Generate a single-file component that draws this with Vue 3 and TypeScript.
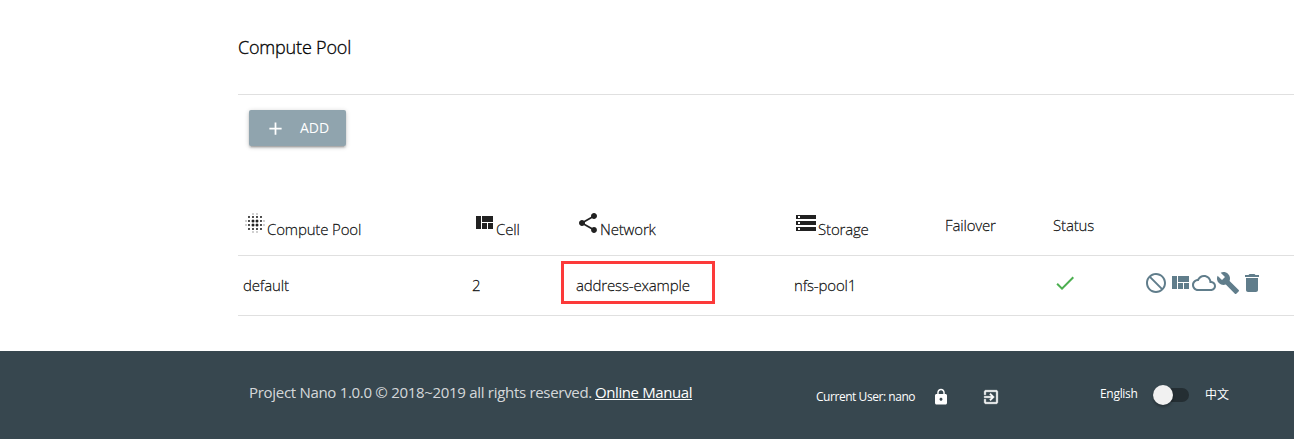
<script setup lang="ts">
import { ref } from 'vue'

interface Column {
  key: string
  label: string
  icon?: string
}

const icons: Record<string, string> = {
  add: 'M19 13h-6v6h-2v-6H5v-2h6V5h2v6h6v2z',
  quilt: 'M10 18h5v-6h-5v6zm-6 0h5V5H4v13zm12 0h5v-6h-5v6zM10 5v6h11V5H10z',
  share:
    'M18 16.08c-.76 0-1.44.3-1.96.77L8.91 12.7c.05-.23.09-.46.09-.7s-.04-.47-.09-.7l7.05-4.11c.54.5 1.25.81 2.04.81 1.66 0 3-1.34 3-3s-1.34-3-3-3-3 1.34-3 3c0 .24.04.47.09.7L8.04 9.81C7.5 9.31 6.79 9 6 9c-1.66 0-3 1.34-3 3s1.34 3 3 3c.79 0 1.5-.31 2.04-.81l7.12 4.16c-.05.21-.08.43-.08.65 0 1.61 1.31 2.92 2.92 2.92s2.92-1.31 2.92-2.92-1.31-2.92-2.92-2.92z',
  storage: 'M2 20h20v-4H2v4zm2-3h2v2H4v-2zM2 4v4h20V4H2zm4 3H4V5h2v2zm-4 7h20v-4H2v4zm2-3h2v2H4v-2z',
  check: 'M9 16.17L4.83 12l-1.42 1.41L9 19 21 7l-1.41-1.41z',
  block:
    'M12 2C17.52 2 22 6.48 22 12s-4.48 10-10 10S2 17.52 2 12 6.48 2 12 2zM20 12c0-4.42-3.58-8-8-8-1.85 0-3.55.63-4.9 1.69L18.31 16.9C19.37 15.55 20 13.85 20 12zm-8 8c1.85 0 3.55-.63 4.9-1.69L5.69 7.1C4.63 8.45 4 10.15 4 12c0 4.42 3.58 8 8 8z',
  cloud:
    'M19.35 10.04C18.67 6.59 15.64 4 12 4 9.11 4 6.6 5.64 5.35 8.04 2.34 8.36 0 10.91 0 14c0 3.31 2.69 6 6 6h13c2.76 0 5-2.24 5-5 0-2.64-2.05-4.78-4.65-4.96zM19 18H6c-2.21 0-4-1.79-4-4s1.79-4 4-4h.71C7.37 7.69 9.48 6 12 6c3.04 0 5.5 2.46 5.5 5.5v.5H19c1.66 0 3 1.34 3 3s-1.34 3-3 3z',
  build:
    'M22.7 19l-9.1-9.1c.9-2.3.4-5-1.5-6.9-2-2-5-2.4-7.4-1.3L9 6 6 9 1.6 4.7C.4 7.1.9 10.1 2.9 12.1c1.9 1.9 4.6 2.4 6.9 1.5l9.1 9.1c.4.4 1 .4 1.4 0l2.3-2.3c.5-.4.5-1.1.1-1.4z',
  trash: 'M6 19c0 1.1.9 2 2 2h8c1.1 0 2-.9 2-2V7H6v12zM19 4h-3.5l-1-1h-5l-1 1H5v2h14V4z',
  lock: 'M18 8h-1V6c0-2.76-2.24-5-5-5S7 3.24 7 6v2H6c-1.1 0-2 .9-2 2v10c0 1.1.9 2 2 2h12c1.1 0 2-.9 2-2V10c0-1.1-.9-2-2-2zm-6 9c-1.1 0-2-.9-2-2s.9-2 2-2 2 .9 2 2-.9 2-2 2zm3.1-9H8.9V6c0-1.71 1.39-3.1 3.1-3.1s3.1 1.39 3.1 3.1v2z',
  exit: 'M10.09 15.59L11.5 17l5-5-5-5-1.41 1.41L12.67 11H3v2h9.67l-2.58 2.59zM19 3H5c-1.11 0-2 .9-2 2v4h2V5h14v14H5v-4H3v4c0 1.1.89 2 2 2h14c1.1 0 2-.9 2-2V5c0-1.1-.9-2-2-2z',
}

const columns: Column[] = [
  { key: 'pool', label: 'Compute Pool', icon: 'blur' },
  { key: 'cell', label: 'Cell', icon: 'quilt' },
  { key: 'network', label: 'Network', icon: 'share' },
  { key: 'storage', label: 'Storage', icon: 'storage' },
  { key: 'failover', label: 'Failover' },
  { key: 'status', label: 'Status' },
]

// Dots of the pool icon on a 6x6 grid, fading from the centre outwards
const steps = [3, 6, 10, 14, 18, 21]
const dots = steps.flatMap((x, i) =>
  steps.map((y, j) => {
    const dx = Math.abs(i - 2.5)
    const dy = Math.abs(j - 2.5)
    const outer = Math.max(dx, dy)
    const inner = Math.min(dx, dy)
    if (outer > 2) return { x, y, r: inner < 1 ? 0.65 : 0 , o: 0.6 }
    return { x, y, r: outer < 1 ? 1.5 : 1.05, o: 1 }
  }),
)

const actions = ['block', 'quilt', 'cloud', 'build', 'trash']
const chinese = ref(false)
</script>

<template>
  <div class="page">
    <main class="content">
      <header class="heading"><span>Compute Pool</span></header>
      <div class="toolbar">
        <button class="add" type="button">
          <svg class="icon" viewBox="0 0 24 24"><path :d="icons.add" /></svg>
          <span>ADD</span>
        </button>
      </div>
      <section class="table">
        <div class="row head">
          <div v-for="c in columns" :key="c.key" class="cell">
            <svg v-if="c.icon === 'blur'" class="icon" viewBox="0 0 24 24">
              <circle v-for="(d, i) in dots" :key="i" :cx="d.x" :cy="d.y" :r="d.r" :opacity="d.o" />
            </svg>
            <svg v-else-if="c.icon" class="icon" viewBox="0 0 24 24"><path :d="icons[c.icon]" /></svg>
            <span :class="['label', { plain: !c.icon }]">{{ c.label }}</span>
          </div>
        </div>
        <div class="row body">
          <div class="cell"><span>default</span></div>
          <div class="cell"><span>2</span></div>
          <div class="cell marked"><span>address-example</span></div>
          <div class="cell"><span>nfs-pool1</span></div>
          <div class="cell"></div>
          <div class="cell ok"><svg class="icon" viewBox="0 0 24 24"><path :d="icons.check" /></svg></div>
          <div class="cell actions">
            <svg v-for="a in actions" :key="a" class="icon" viewBox="0 0 24 24"><path :d="icons[a]" /></svg>
          </div>
        </div>
      </section>
    </main>
    <footer class="footer">
      <div class="copy">
        <span>Project Nano 1.0.0 © 2018~2019 all rights reserved.</span>
        <a>Online Manual</a>
      </div>
      <div class="user">
        <span class="t-user">Current User: nano</span>
        <svg class="small lock" viewBox="0 0 24 24"><path :d="icons.lock" /></svg>
        <svg class="small exit" viewBox="0 0 24 24"><path :d="icons.exit" /></svg>
      </div>
      <div class="lang">
        <span class="t-english">English</span>
        <span :class="['switch', { on: chinese }]" @click="chinese = !chinese"><i class="knob"></i></span>
        <span class="zh">中文</span>
      </div>
    </footer>
  </div>
</template>

<style>
body {
  margin: 0;
  background: #fff;
}
</style>

<style scoped>
.page {
  width: 1294px;
  height: 439px;
  overflow: hidden;
  display: flex;
  flex-direction: column;
  font-family: 'Open Sans', 'Noto Sans', 'Noto Sans CJK SC', sans-serif;
  font-size: 15px;
  line-height: 22px;
  color: rgba(0, 0, 0, 0.87);
  white-space: nowrap;
}
.content {
  height: 351px;
  margin-left: 238px;
}
.heading {
  height: 94px;
  display: flex;
  align-items: center;
  border-bottom: 1px solid #e0e0e0;
  font-size: 18px;
  font-weight: 300;
  letter-spacing: -0.18px;
  color: #000;
}
.heading span,
.row span {
  -webkit-text-stroke: 0.3px currentColor;
}
.toolbar {
  height: 85px;
  padding: 15px 0 0 11px;
  box-sizing: content-box;
}
.add {
  display: flex;
  align-items: center;
  width: 97px;
  height: 36px;
  padding: 0 16px;
  border: 0;
  border-radius: 2px;
  background: #90a4ae;
  color: #fff;
  font: 14px 'Open Sans', sans-serif;
  box-shadow: 0 2px 2px rgba(0, 0, 0, 0.14), 0 3px 1px -2px rgba(0, 0, 0, 0.12), 0 1px 5px rgba(0, 0, 0, 0.2);
}
.add span {
  margin-top: -1px;
}
.add .icon {
  width: 21px;
  height: 21px;
  margin-right: 14px;
}
.icon {
  width: 24px;
  height: 24px;
  flex: none;
  display: block;
  fill: currentColor;
}
.row {
  display: grid;
  grid-template-columns: 229px 104px 218px 151px 108px 93px 1fr;
  height: 60px;
  border-bottom: 1px solid #e0e0e0;
  font-weight: 300;
  letter-spacing: -0.16px;
}
.body {
  height: 59px;
}
.cell {
  display: flex;
  align-items: center;
  padding-left: 5px;
}
.body .cell {
  padding-bottom: 1px;
}
.head .cell {
  align-items: flex-start;
  padding-top: 16px;
}
.label {
  padding-top: 7px;
}
.label.plain {
  padding-top: 3px;
}
.body .marked {
  box-sizing: border-box;
  width: 154px;
  height: 43px;
  margin: 5px 0 0 -10px;
  padding: 5px 0 0 12px;
  border: 3px solid #fc3a3a;
}
.body .ok,
.body .actions {
  padding-bottom: 5px;
}
.ok {
  color: #4caf50;
}
.actions {
  padding-left: 3px;
  color: #607d8b;
}
.footer {
  flex: 1;
  display: flex;
  align-items: flex-start;
  background: #37474f;
  color: #fff;
}
.copy {
  box-sizing: border-box;
  display: flex;
  gap: 3px;
  width: 816px;
  padding: 30px 0 0 249px;
  color: rgba(255, 255, 255, 0.8);
  letter-spacing: -0.3px;
}
.copy a {
  color: #fff;
  text-decoration: underline;
  letter-spacing: -0.4px;
}
.user {
  display: flex;
  align-items: center;
  width: 284px;
  padding-top: 35px;
  font-size: 12px;
  letter-spacing: -0.45px;
}
.t-user {
  width: 116px;
}
.small {
  width: 18px;
  height: 18px;
  fill: #fff;
}
.exit {
  stroke: #fff;
  stroke-width: 0.6;
}
.lock {
  margin-right: 32px;
}
.lang {
  display: flex;
  align-items: center;
  padding-top: 32px;
  font-size: 12px;
}
.t-english {
  width: 53px;
  letter-spacing: -0.3px;
}
.switch {
  display: flex;
  align-items: center;
  width: 36px;
  height: 14px;
  margin: 2px 16px 0 0;
  border-radius: 8px;
  background: #242e33;
}
.knob {
  width: 20px;
  height: 20px;
  flex: none;
  border-radius: 50%;
  background: #f1f1f1;
  box-shadow: 0 2px 3px rgba(0, 0, 0, 0.3);
}
.switch.on .knob {
  margin-left: 17px;
}
.zh {
  font-family: 'Noto Sans CJK SC', sans-serif;
}
</style>
